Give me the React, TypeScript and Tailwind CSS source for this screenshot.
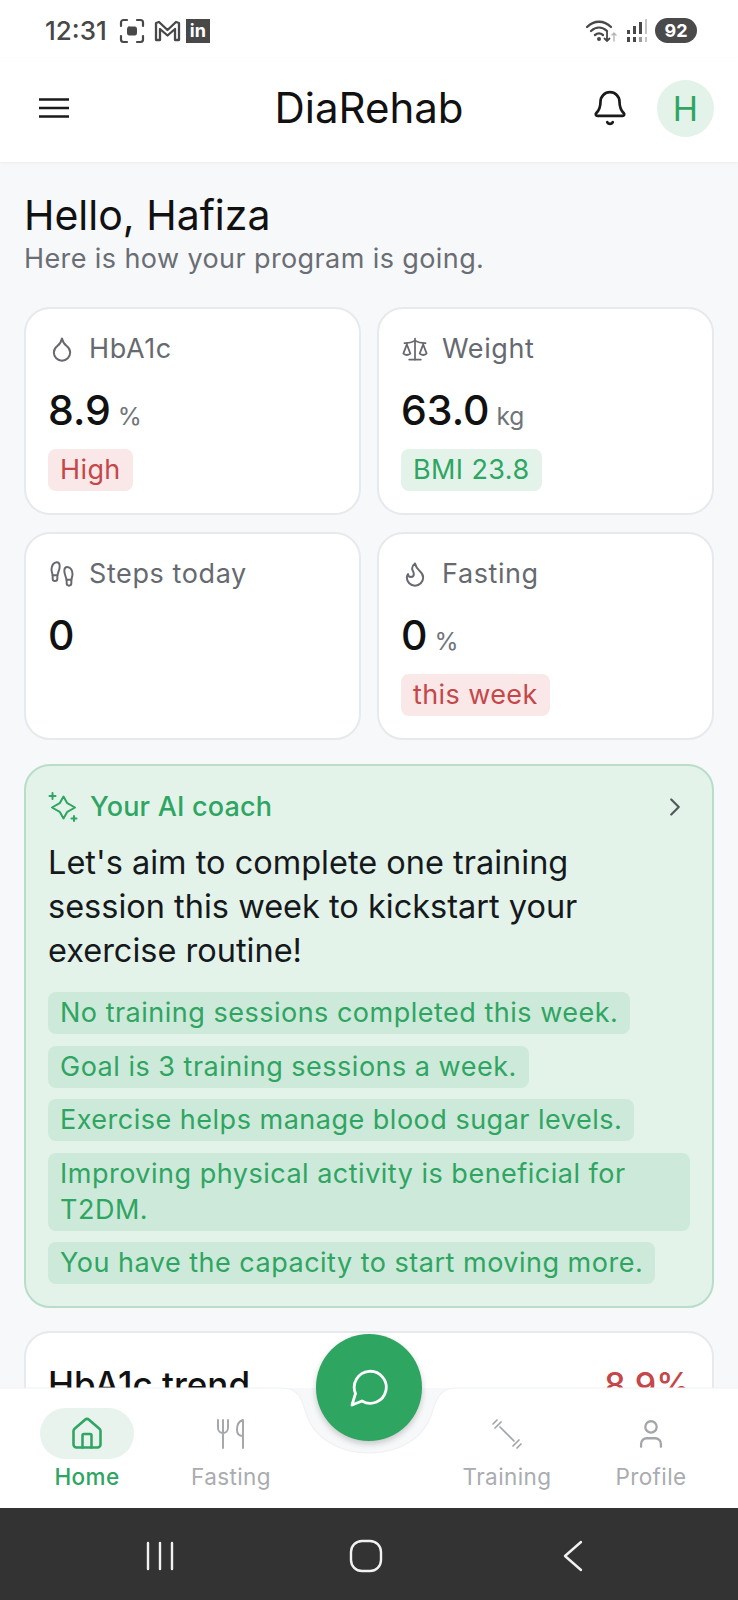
import type { ReactNode } from "react";
import {
  Bell,
  ChevronRight,
  Droplet,
  Flame,
  Footprints,
  House,
  Scale,
  User,
} from "lucide-react";

const bullets = [
  "No training sessions completed this week.",
  "Goal is 3 training sessions a week.",
  "Exercise helps manage blood sugar levels.",
  "Improving physical activity is beneficial for T2DM.",
  "You have the capacity to start moving more.",
];

function StatusBar() {
  return (
    <div className="flex h-[58px] shrink-0 items-center justify-between bg-white pl-[45px] pr-[41px] pt-[3px] text-[#484848]">
      <div className="flex items-center gap-[9px]">
        <span className="mr-[3px] text-[26px] font-medium leading-none">12:31</span>
        <svg width="26" height="26" viewBox="0 0 26 26" fill="none" stroke="currentColor" strokeWidth="2.2" strokeLinecap="round">
          <path d="M2 8V4.500A2.500 2.500 0 0 1 4.500 2H8M18 2h3.500A2.500 2.500 0 0 1 24 4.500V8M24 18v3.500A2.500 2.500 0 0 1 21.500 24H18M8 24H4.500A2.500 2.500 0 0 1 2 21.500V18" />
          <rect x="8.500" y="9" width="9" height="8" rx="1.500" fill="currentColor" strokeWidth="1" />
        </svg>
        <svg width="27" height="22" viewBox="0 0 27 22" fill="none" stroke="currentColor" strokeWidth="2.300" strokeLinejoin="round">
          <path d="M2 20V3l3-1 8.500 8L22 2l3 1v17h-4V9l-7.500 6.500L6 9v11z" />
        </svg>
        <span className="-ml-[4px] flex h-[24px] w-[24px] items-center justify-center bg-[#484848] text-[18px] font-bold leading-none text-white">
          in
        </span>
      </div>
      <div className="flex items-center gap-[7px]">
        <svg width="34" height="26" viewBox="0 0 34 26" fill="none" stroke="currentColor" strokeWidth="2.300" strokeLinecap="round">
          <path d="M2 9c7-7 17-7 24 0M6 13c5-4.500 11-4.500 16 0M10 17c2.500-2 5.500-2 8 0" />
          <circle cx="14" cy="21" r="2" fill="currentColor" stroke="none" />
          <path d="M22 14v9m-2.500-2.500L22 23l2.500-2.500" strokeWidth="1.800" />
          <path d="M29 23v-8m-2 2l2-2 2 2" strokeWidth="1.400" stroke="#b5b5b5" />
        </svg>
        <svg width="22" height="26" viewBox="0 0 22 26" fill="currentColor">
          <rect x="1" y="12" width="3" height="4" />
          <rect x="7" y="8" width="3" height="8" />
          <rect x="13" y="4" width="3" height="12" />
          <rect x="19" y="1" width="2" height="15" fill="#c4c4c4" />
          <rect x="1" y="19" width="3" height="5" />
          <rect x="7" y="19" width="3" height="5" />
          <rect x="13" y="19" width="3" height="5" fill="#9a9a9a" />
          <rect x="19" y="19" width="2" height="5" fill="#c4c4c4" />
        </svg>
        <span className="flex h-[25px] w-[42px] items-center justify-center rounded-full bg-[#4a4a4a] text-[18px] font-bold leading-none text-white">
          92
        </span>
      </div>
    </div>
  );
}

function Header() {
  return (
    <header className="relative flex h-[104px] shrink-0 items-center justify-between bg-white pb-[4px] pl-[39px] pr-[24px] shadow-[0_1px_3px_rgba(0,0,0,0.05)]">
      <svg width="30" height="22" viewBox="0 0 30 22" stroke="#1a1a1a" strokeWidth="2.600">
        <path d="M0 2.500h30M0 11h30M0 19.500h30" />
      </svg>
      <h1 className="absolute left-0 right-0 text-center text-[42px] font-normal leading-none text-[#111]">DiaRehab</h1>
      <div className="flex items-center gap-[28px]">
        <Bell size={38} strokeWidth={1.700} className="text-[#1a1a1a]" />
        <div className="flex h-[57px] w-[57px] items-center justify-center rounded-full bg-[#e3f3ea] text-[34px] text-[#2fa562]">
          H
        </div>
      </div>
    </header>
  );
}

function StatCard({
  icon,
  label,
  value,
  unit,
  chip,
  chipTone,
}: {
  icon: ReactNode;
  label: string;
  value: string;
  unit?: string;
  chip?: string;
  chipTone?: "red" | "green";
}) {
  return (
    <div className="h-[208px] rounded-[26px] border-2 border-[#e6e9ed] bg-white px-[22px] pt-[22px]">
      <div className="flex h-[36px] items-center gap-[13px] text-[27px] tracking-[0.6px] text-[#666a70]">
        <span className="flex w-[28px] justify-center">{icon}</span>
        {label}
      </div>
      <div className="mt-[18px] flex h-[50px] items-baseline gap-[7px]">
        <span className="text-[41px] font-medium leading-[50px] text-[#111]">{value}</span>
        {unit && <span className="text-[24.5px] text-[#707479]">{unit}</span>}
      </div>
      {chip && (
        <span
          className={
            "mt-[14px] inline-block h-[42px] rounded-[8px] px-[12px] text-[27px] leading-[42px] tracking-[0.4px] " +
            (chipTone === "red" ? "bg-[#fae8e8] text-[#c4474a]" : "bg-[#e3f3ea] text-[#2fa562]")
          }
        >
          {chip}
        </span>
      )}
    </div>
  );
}

function CoachSparkle() {
  return (
    <svg width="30" height="30" viewBox="0 0 30 30" fill="none" stroke="#2fa562" strokeWidth="2" strokeLinejoin="round" strokeLinecap="round">
      <path d="M15.500 4.500l3.800 6.700 7.700 4.300-7.700 4.300-3.800 6.700-3.800-6.700-7.700-4.300 7.700-4.300z" />
      <path d="M4.500 1v6M1.500 4h6M26 24v5M23.500 26.500h5" />
    </svg>
  );
}

function FastingIcon() {
  return (
    <svg width="32" height="32" viewBox="0 0 32 32" fill="none" stroke="currentColor" strokeWidth="1.900" strokeLinecap="round" strokeLinejoin="round">
      <path d="M3 2v8a5 5 0 0 0 10 0V2M8 2v28M28 30V2c-4 1-6 5-6 10 0 4 2 6 6 6" />
    </svg>
  );
}

function TrainingIcon() {
  return (
    <svg width="32" height="32" viewBox="0 0 32 32" fill="none" stroke="currentColor" strokeWidth="1.700" strokeLinecap="round">
      <path d="M9 9l14 14M4 10l6-6M2 6l4-4M22 28l6-6M26 30l4-4" />
    </svg>
  );
}

function NavItem({ icon, label, active }: { icon: ReactNode; label: string; active?: boolean }) {
  return (
    <div className="flex w-[144px] flex-col items-center">
      <div className={"flex h-[51px] w-[94px] items-center justify-center rounded-[26px] " + (active ? "bg-[#e7f3ec] text-[#2fa562]" : "text-[#a2a5a9]")}>
        {icon}
      </div>
      <span className={"mt-[3px] text-[22.5px] leading-[30px] tracking-[0.4px] " + (active ? "font-medium text-[#2fa562]" : "text-[#a9acb0]")}>
        {label}
      </span>
    </div>
  );
}

function BottomNav() {
  return (
    <nav className="relative z-10 flex h-[120px] shrink-0 justify-between bg-white px-[15px] pt-[20px]">
      <svg width="738" height="70" viewBox="0 0 738 70" className="absolute left-0 top-[-1px]" fill="none">
        <path d="M0 1H282C298 1 302 12 306 26C314 52 340 66 369 66C398 66 424 52 432 26C436 12 440 1 456 1H738" fill="#f7f8fa" stroke="#f0f1f3" strokeWidth="1.200" />
      </svg>
      <NavItem icon={<House size={36} strokeWidth={1.700} />} label="Home" active />
      <NavItem icon={<FastingIcon />} label="Fasting" />
      <div className="flex-1" />
      <NavItem icon={<TrainingIcon />} label="Training" />
      <NavItem icon={<User size={34} strokeWidth={1.600} />} label="Profile" />
      <div className="absolute left-[316px] top-[-54px] flex h-[107px] w-[106px] items-center justify-center rounded-full bg-[#2fa562] shadow-[0_3px_6px_rgba(0,0,0,0.2)]">
        <svg width="40" height="40" viewBox="0 0 40 40" fill="none" stroke="#fff" strokeWidth="2.800" strokeLinejoin="round">
          <path d="M3 37L6.500 25.500A16 16 0 1 1 13 33Z" />
        </svg>
      </div>
    </nav>
  );
}

function SystemNav() {
  return (
    <div className="flex h-[92px] shrink-0 items-center bg-[#333333] pl-[145px] pt-[4px]">
      <svg width="30" height="30" viewBox="0 0 30 30" stroke="#f2f2f2" strokeWidth="2.400" strokeLinecap="round">
        <path d="M3 2v26M15 2v26M27 2v26" />
      </svg>
      <svg width="34" height="34" viewBox="0 0 34 34" fill="none" stroke="#f2f2f2" strokeWidth="2.400" className="ml-[174px]">
        <rect x="2" y="2" width="30" height="30" rx="11" />
      </svg>
      <svg width="20" height="32" viewBox="0 0 20 32" fill="none" stroke="#f2f2f2" strokeWidth="2.400" strokeLinecap="round" strokeLinejoin="round" className="ml-[180px]">
        <path d="M18 2L2 16l16 14" />
      </svg>
    </div>
  );
}

export default function App() {
  return (
    <div className="flex h-[1600px] w-[738px] flex-col overflow-hidden bg-[#f7f8fa] font-['Inter',sans-serif]">
      <StatusBar />
      <Header />
      <main className="min-h-0 flex-1 overflow-hidden px-[24px] pt-[29px]">
        <h2 className="text-[41px] font-normal leading-[48px] text-[#111]">Hello, Hafiza</h2>
        <p className="mt-[2px] text-[27px] leading-[36px] tracking-[0.4px] text-[#6a6e74]">Here is how your program is going.</p>

        <div className="mt-[30px] grid grid-cols-2 gap-x-[16px] gap-y-[17px]">
          <StatCard icon={<Droplet size={30} strokeWidth={1.700} />} label="HbA1c" value="8.9" unit="%" chip="High" chipTone="red" />
          <StatCard icon={<Scale size={32} strokeWidth={1.500} />} label="Weight" value="63.0" unit="kg" chip="BMI 23.8" chipTone="green" />
          <StatCard icon={<Footprints size={30} strokeWidth={1.700} />} label="Steps today" value="0" />
          <StatCard icon={<Flame size={30} strokeWidth={1.700} />} label="Fasting" value="0" unit="%" chip="this week" chipTone="red" />
        </div>

        <section className="mt-[24px] rounded-[26px] border-2 border-[#b9ddc9] bg-[#e3f3ea] px-[22px] pb-[22px] pt-[21px]">
          <div className="flex h-[40px] items-center justify-between">
            <div className="flex items-center gap-[12px] text-[27px] font-medium tracking-[0.2px] text-[#2fa562]">
              <CoachSparkle />
              Your AI coach
            </div>
            <ChevronRight size={30} strokeWidth={1.800} className="text-[#55595e]" />
          </div>
          <p className="mt-[14px] max-w-[590px] text-[32.5px] leading-[44px] text-[#16191c]">
            Let's aim to complete one training session this week to kickstart your exercise routine!
          </p>
          <div className="mt-[19px] flex flex-col items-start gap-[11.5px]">
            {bullets.map((b) => (
              <span key={b} className="rounded-[8px] bg-[#cde9d9] px-[12px] py-[3px] text-[27px] leading-[36px] tracking-[0.5px] text-[#2fa562]">
                {b}
              </span>
            ))}
          </div>
        </section>

        <section className="mt-[23px] h-[200px] rounded-[26px] border-2 border-[#e6e9ed] bg-white px-[22px] pt-[25px]">
          <div className="flex items-center justify-between">
            <span className="text-[35px] font-medium text-[#111]">HbA1c trend</span>
            <span className="text-[34px] font-medium text-[#c4474a]">8.9%</span>
          </div>
        </section>
      </main>
      <BottomNav />
      <SystemNav />
    </div>
  );
}
